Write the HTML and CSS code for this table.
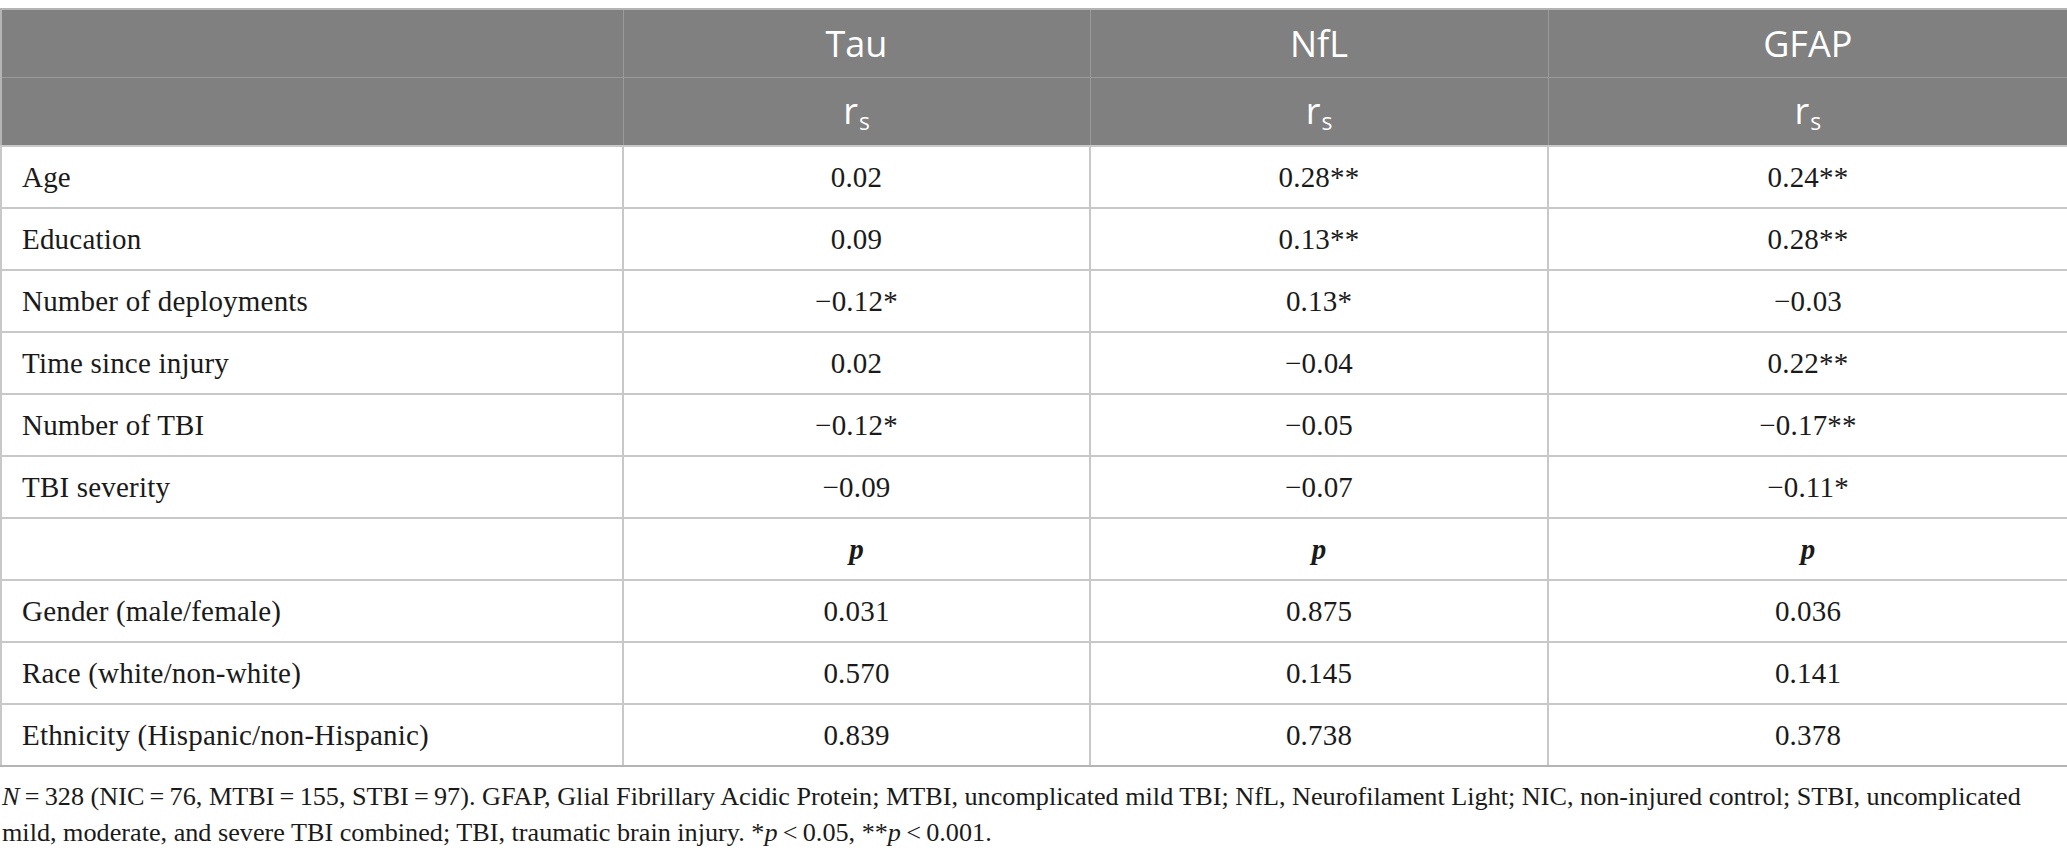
FILE: index.html
```html
<!DOCTYPE html>
<html lang="en">
<head>
  <meta charset="UTF-8">
  <title>Biomarker correlations</title>
  <link rel="stylesheet" href="styles.css">
</head>
<body>

  <table class="tabela">
    <colgroup>
      <col class="c-label">
      <col class="c-tau">
      <col class="c-nfl">
      <col class="c-gfap">
    </colgroup>
    <thead>
      <tr>
        <th></th>
        <th>Tau</th>
        <th>NfL</th>
        <th>GFAP</th>
      </tr>
      <tr>
        <th></th>
        <th>r<sub>s</sub></th>
        <th>r<sub>s</sub></th>
        <th>r<sub>s</sub></th>
      </tr>
    </thead>
    <tbody>
      <tr><td>Age</td><td>0.02</td><td>0.28**</td><td>0.24**</td></tr>
      <tr><td>Education</td><td>0.09</td><td>0.13**</td><td>0.28**</td></tr>
      <tr><td>Number of deployments</td><td>−0.12*</td><td>0.13*</td><td>−0.03</td></tr>
      <tr><td>Time since injury</td><td>0.02</td><td>−0.04</td><td>0.22**</td></tr>
      <tr><td>Number of TBI</td><td>−0.12*</td><td>−0.05</td><td>−0.17**</td></tr>
      <tr><td>TBI severity</td><td>−0.09</td><td>−0.07</td><td>−0.11*</td></tr>
      <tr class="sub"><td></td><td><b><i>p</i></b></td><td><b><i>p</i></b></td><td><b><i>p</i></b></td></tr>
      <tr><td>Gender (male/female)</td><td>0.031</td><td>0.875</td><td>0.036</td></tr>
      <tr><td>Race (white/non-white)</td><td>0.570</td><td>0.145</td><td>0.141</td></tr>
      <tr><td>Ethnicity (Hispanic/non-Hispanic)</td><td>0.839</td><td>0.738</td><td>0.378</td></tr>
    </tbody>
  </table>

  <p class="nota"><i>N</i>&thinsp;=&thinsp;328 (NIC&thinsp;=&thinsp;76, MTBI&thinsp;=&thinsp;155, STBI&thinsp;=&thinsp;97). GFAP, Glial Fibrillary Acidic Protein; MTBI, uncomplicated mild TBI; NfL, Neurofilament Light; NIC, non-injured control; STBI, uncomplicated mild, moderate, and severe TBI combined; TBI, traumatic brain injury. *<i>p</i>&thinsp;&lt;&thinsp;0.05, **<i>p</i>&thinsp;&lt;&thinsp;0.001.</p>

</body>
</html>
```

FILE: styles.css
```css
body {
  margin: 0;
  padding-top: 8px;
  background: #fff;
  font-family: "Liberation Serif", "Times New Roman", serif;
  color: #1a1a1a;
}

.tabela {
  width: 2067px;
  border-collapse: collapse;
  table-layout: fixed;
  border: 2px solid #b4b4b4;
}

.c-label { width: 622px; }
.c-tau { width: 467px; }
.c-nfl { width: 458px; }
.c-gfap { width: 520px; }

.tabela th {
  background: #7f807f;
  color: #fff;
  font-family: "Open Sans", "Noto Sans", sans-serif;
  font-weight: 400;
  font-size: 36px;
  height: 67px;
  padding: 0;
  border: 1px solid #9a9a9a;
}

.tabela th sub {
  font-size: 23px;
  vertical-align: -6px;
  margin-left: 1px;
}

.tabela td {
  height: 60px;
  padding: 0;
  font-size: 29px;
  letter-spacing: 0.2px;
  text-align: center;
  border: 2px solid #c8c8c8;
}

.tabela td:first-child {
  text-align: left;
  padding-left: 20px;
}

.tabela tbody tr:last-child td {
  border-bottom-color: #b4b4b4;
}

.nota {
  width: 2050px;
  margin: 12px 0 0 2px;
  font-size: 26.2px;
  line-height: 36px;
}
```
